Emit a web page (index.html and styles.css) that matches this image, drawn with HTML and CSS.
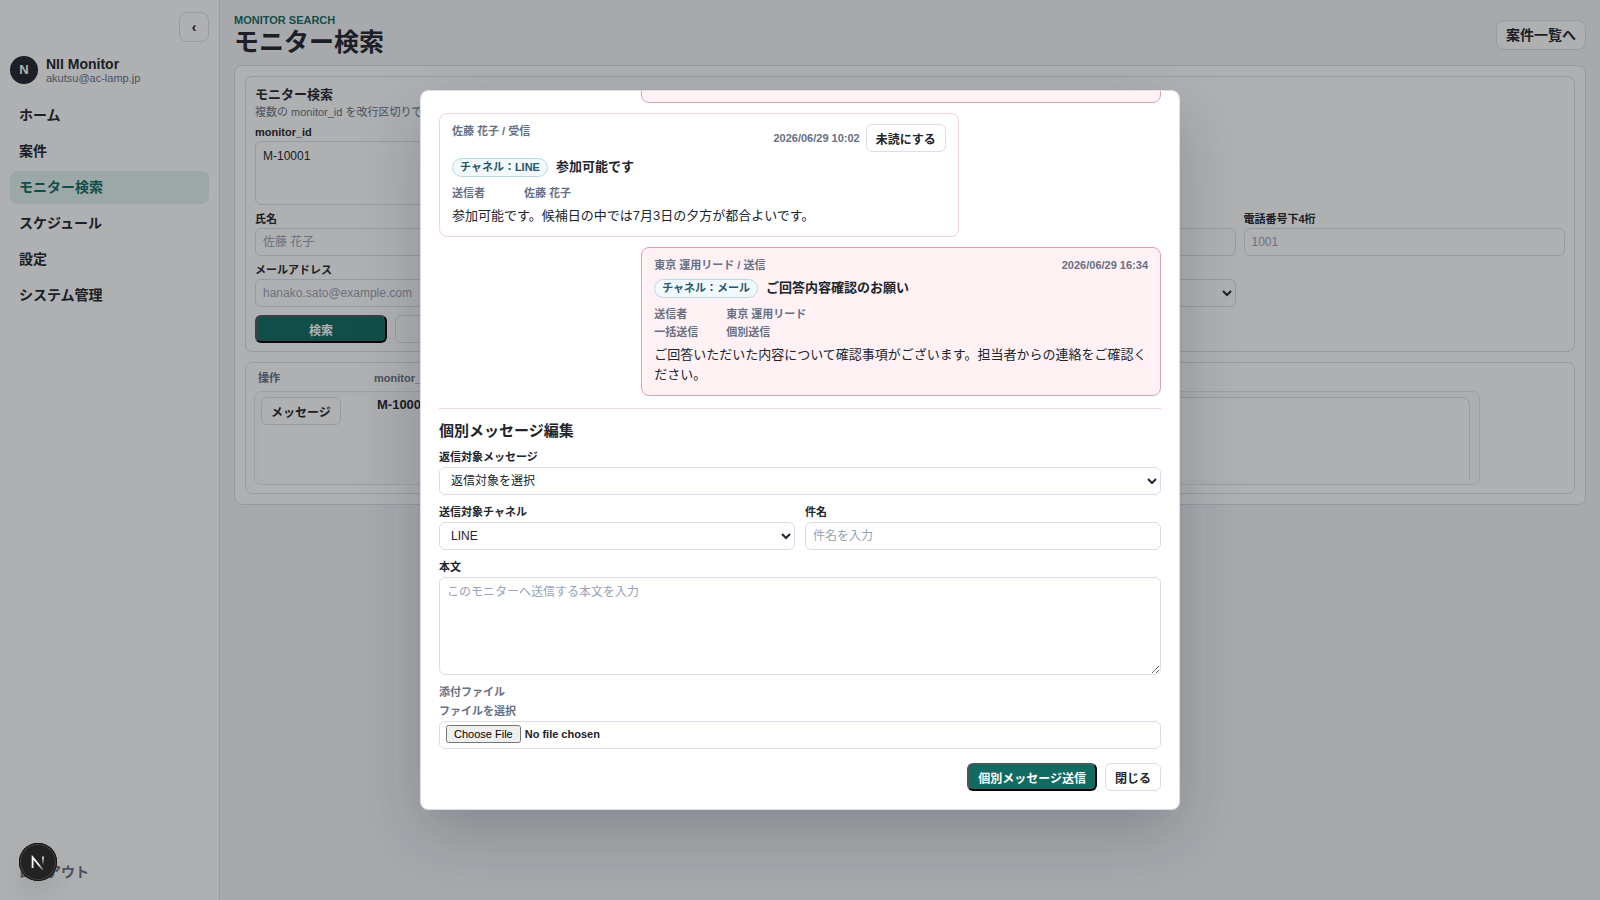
FILE: index.html
```html
<!DOCTYPE html>
<html lang="ja">
<head>
    <meta charset="UTF-8">
    <meta name="viewport" content="width=device-width, initial-scale=1.0">
    <title>モニター検索 | NII Monitor</title>
    <link rel="stylesheet" href="styles.css">
</head>
<body>
    <div class="app">
        <aside class="sidebar">
            <button type="button" class="collapse" aria-label="サイドバーを閉じる">‹</button>
            <div class="account">
                <span class="avatar">N</span>
                <div>
                    <p class="account-name">NII Monitor</p>
                    <p class="account-mail">akutsu@ac-lamp.jp</p>
                </div>
            </div>
            <nav class="nav">
                <a href="#">ホーム</a>
                <a href="#">案件</a>
                <a href="#" class="active">モニター検索</a>
                <a href="#">スケジュール</a>
                <a href="#">設定</a>
                <a href="#">システム管理</a>
            </nav>
            <a href="#" class="logout">ログアウト</a>
        </aside>

        <main class="main">
            <header class="page-header">
                <div>
                    <p class="eyebrow">MONITOR SEARCH</p>
                    <h1>モニター検索</h1>
                </div>
                <a href="#" class="header-link">案件一覧へ</a>
            </header>

            <div class="panel">
                <form class="search">
                    <h2>モニター検索</h2>
                    <p class="hint">複数の monitor_id を改行区切りで検索</p>
                    <div class="search-grid">
                        <label class="field first">monitor_id
                            <textarea class="ids">M-10001</textarea>
                        </label>
                        <label class="field">氏名
                            <input type="text" placeholder="佐藤 花子">
                        </label>
                        <label class="field">氏名カナ
                            <input type="text">
                        </label>
                        <label class="field">LINE ID
                            <input type="text">
                        </label>
                        <label class="field">電話番号下4桁
                            <input type="text" placeholder="1001">
                        </label>
                        <label class="field">メールアドレス
                            <input type="text" placeholder="hanako.sato@example.com">
                        </label>
                        <label class="field">地域
                            <input type="text">
                        </label>
                        <label class="field">状態
                            <select><option>すべて</option></select>
                        </label>
                    </div>
                    <div class="search-actions">
                        <button type="button" class="btn primary">検索</button>
                        <button type="button" class="btn">クリア</button>
                    </div>
                </form>

                <section class="results">
                    <table>
                        <thead>
                            <tr><th>操作</th><th>monitor_id</th><th></th></tr>
                        </thead>
                        <tbody>
                            <tr>
                                <td><button type="button" class="btn">メッセージ</button></td>
                                <td>M-10001</td>
                                <td><div class="detail-box"></div></td>
                            </tr>
                        </tbody>
                    </table>
                </section>
            </div>
        </main>
    </div>

    <div class="overlay">
        <div class="modal" role="dialog" aria-modal="true" aria-label="メッセージ">
            <div class="modal-body">
                <div class="thread">
                    <article class="message sent"></article>

                    <article class="message">
                        <div class="message-head">
                            <span>佐藤 花子 / 受信</span>
                            <div class="message-tools">
                                <time>2026/06/29 10:02</time>
                                <button type="button" class="btn">未読にする</button>
                            </div>
                        </div>
                        <div class="message-subject">
                            <span class="channel">チャネル：LINE</span>
                            <strong>参加可能です</strong>
                        </div>
                        <dl>
                            <dt>送信者</dt><dd>佐藤 花子</dd>
                        </dl>
                        <p class="message-text">参加可能です。候補日の中では7月3日の夕方が都合よいです。</p>
                    </article>

                    <article class="message sent">
                        <div class="message-head">
                            <span>東京 運用リード / 送信</span>
                            <time>2026/06/29 16:34</time>
                        </div>
                        <div class="message-subject">
                            <span class="channel">チャネル：メール</span>
                            <strong>ご回答内容確認のお願い</strong>
                        </div>
                        <dl>
                            <dt>送信者</dt><dd>東京 運用リード</dd>
                            <dt>一括送信</dt><dd>個別送信</dd>
                        </dl>
                        <p class="message-text">ご回答いただいた内容について確認事項がございます。担当者からの連絡をご確認ください。</p>
                    </article>
                </div>

                <form class="compose">
                    <h3>個別メッセージ編集</h3>
                    <label class="field">返信対象メッセージ
                        <select><option>返信対象を選択</option></select>
                    </label>
                    <div class="compose-row">
                        <label class="field">送信対象チャネル
                            <select><option>LINE</option><option>メール</option></select>
                        </label>
                        <label class="field">件名
                            <input type="text" placeholder="件名を入力">
                        </label>
                    </div>
                    <label class="field">本文
                        <textarea class="body-text" placeholder="このモニターへ送信する本文を入力"></textarea>
                    </label>
                    <div class="attach">
                        <p>添付ファイル</p>
                        <label class="field" for="file">ファイルを選択</label>
                        <input type="file" id="file">
                    </div>
                    <div class="modal-actions">
                        <button type="button" class="btn primary">個別メッセージ送信</button>
                        <button type="button" class="btn">閉じる</button>
                    </div>
                </form>
            </div>
        </div>
    </div>

    <button type="button" class="dev-badge" aria-label="開発ツール">
        <svg width="38" height="38" viewBox="0 0 38 38" fill="none">
            <defs>
                <linearGradient id="diag" x1="20" y1="21" x2="25" y2="27" gradientUnits="userSpaceOnUse">
                    <stop stop-color="#fff"/>
                    <stop offset="1" stop-color="#fff" stop-opacity="0.1"/>
                </linearGradient>
                <linearGradient id="stem" x1="24" y1="13" x2="24" y2="22" gradientUnits="userSpaceOnUse">
                    <stop stop-color="#fff"/>
                    <stop offset="1" stop-color="#fff" stop-opacity="0"/>
                </linearGradient>
            </defs>
            <path d="M13.6 25V14.2L24 27" stroke="url(#diag)" stroke-width="1.8"/>
            <path d="M24 13.4V22" stroke="url(#stem)" stroke-width="1.8"/>
        </svg>
    </button>
</body>
</html>
```
FILE: styles.css
```css
* {
    box-sizing: border-box;
}
body {
    margin: 0;
    font-family: "Liberation Sans", "Noto Sans CJK JP", sans-serif;
    font-size: 13px;
    line-height: 20px;
    color: #20242c;
    background: #f5f5f9;
}
h1, h2, h3, p, dl, dd {
    margin: 0;
}
a {
    color: inherit;
    text-decoration: none;
}
button, input, select, textarea {
    font-family: inherit;
    color: inherit;
}

/* layout */
.app {
    display: grid;
    grid-template-columns: 220px 1fr;
    min-height: 100vh;
}
.sidebar {
    display: flex;
    flex-direction: column;
    padding: 12px 10px 11px;
    background: #fff;
    border-right: 1px solid #d9deea;
}
.collapse {
    align-self: flex-end;
    width: 30px;
    height: 30px;
    padding: 0;
    border: 1px solid #d9deea;
    border-radius: 8px;
    background: #fff;
    font-size: 14px;
    font-weight: bold;
}
.account {
    display: flex;
    align-items: center;
    gap: 8px;
    margin: 14px 0 15px;
}
.avatar {
    width: 28px;
    height: 28px;
    border-radius: 50%;
    background: #20242c;
    color: #fff;
    font-size: 13px;
    font-weight: bold;
    line-height: 28px;
    text-align: center;
}
.account-name {
    font-size: 14px;
    font-weight: bold;
    line-height: 16px;
}
.account-mail {
    font-size: 11px;
    line-height: 12px;
    color: #667085;
}
.nav {
    display: grid;
    gap: 3px;
}
.nav a, .logout {
    padding: 0 9px;
    border-radius: 7px;
    font-size: 14px;
    font-weight: bold;
    line-height: 33px;
}
.nav .active {
    background: #e3f3f1;
    color: #116b62;
}
.logout {
    margin-top: auto;
    color: #667085;
}
.main {
    min-width: 0;
    padding: 14px;
}
.page-header {
    display: flex;
    align-items: center;
    justify-content: space-between;
    margin-bottom: 10px;
}
.eyebrow {
    font-size: 11px;
    font-weight: bold;
    line-height: 13px;
    color: #116b62;
}
h1 {
    padding-top: 2px;
    font-size: 25px;
    line-height: 26px;
}
.header-link {
    padding: 0 9px;
    border: 1px solid #d9deea;
    border-radius: 8px;
    background: #fff;
    font-size: 14px;
    font-weight: bold;
    line-height: 28px;
}
.panel {
    display: grid;
    gap: 10px;
    padding: 10px;
    border: 1px solid #d9deea;
    border-radius: 8px;
    background: #fff;
}

/* form parts */
.field {
    display: grid;
    gap: 2px;
    align-content: start;
    font-size: 11px;
    font-weight: bold;
    line-height: 15px;
}
input, select, textarea {
    width: 100%;
    height: 28px;
    padding: 0 7px;
    border: 1px solid #d9deea;
    border-radius: 6px;
    background: #fff;
    font-size: 12px;
    font-weight: normal;
    line-height: 16px;
}
textarea {
    display: block;
    padding: 6px 7px;
}
::placeholder {
    color: #98a2b8;
}
.btn {
    height: 28px;
    padding: 0 9px;
    border: 1px solid #d9deea;
    border-radius: 6px;
    background: #fff;
    font-size: 12px;
    font-weight: bold;
    white-space: nowrap;
}
.btn.primary {
    border: 2px outset #000;
    background: #116b62;
    color: #fff;
}

/* search */
.search, .results {
    padding: 8px 9px;
    border: 1px solid #d9deea;
    border-radius: 7px;
}
.search h2 {
    font-size: 13px;
    line-height: 20px;
}
.hint {
    margin-bottom: 6px;
    font-size: 11px;
    line-height: 15px;
    color: #667085;
}
.search-grid {
    display: grid;
    grid-template-columns: repeat(4, 1fr);
    gap: 8px;
}
.search .field {
    line-height: 13px;
}
.search .first {
    grid-column: 1 / -1;
}
.ids {
    width: 322px;
    height: 64px;
    resize: none;
}
.search-actions {
    display: flex;
    gap: 8px;
    margin-top: 8px;
}
.search-actions .btn {
    width: 132px;
}

/* results */
.results {
    padding: 8px;
    overflow-x: auto;
}
table, thead, tbody {
    display: block;
}
table {
    width: 1226px;
}
tr {
    display: grid;
    grid-template-columns: 110px 110px 1fr;
    gap: 6px;
}
thead tr {
    padding: 0 4px 4px;
}
th {
    padding: 0;
    height: 16px;
    font-size: 11px;
    line-height: 15px;
    text-align: left;
    color: #667085;
}
tbody tr {
    padding: 5px 6px;
    border: 1px solid #e4e8f0;
    border-radius: 7px;
    background: #fbfcfe;
}
td {
    height: 82px;
    padding: 0;
    overflow: hidden;
    font-weight: bold;
    line-height: 15px;
}
td:first-child {
    background: #fff;
}
.detail-box {
    height: 96px;
    margin-right: 3px;
    border: 1px solid #d9deea;
    border-radius: 8px;
    background: #fff;
}

/* message modal */
.overlay {
    position: fixed;
    inset: 0;
    display: grid;
    place-items: center;
    background: rgba(20, 22, 26, 0.34);
}
/* column-reverse keeps the newest message and the form in view */
.modal {
    display: flex;
    flex-direction: column-reverse;
    width: min(760px, 94vw);
    height: 80vh;
    overflow-y: auto;
    scrollbar-width: none;
    border: 1px solid #d9deea;
    border-radius: 8px;
    background: #fff;
    box-shadow: 0 24px 64px rgba(15, 23, 42, 0.22);
}
.modal-body {
    padding: 18px;
}
.thread {
    display: grid;
    gap: 10px;
}
.message {
    display: grid;
    gap: 5px;
    width: 72%;
    padding: 10px 12px;
    border: 1px solid #f3d3dc;
    border-radius: 8px;
}
.message.sent {
    justify-self: end;
    border-color: #dda2b1;
    background: #fff1f4;
}
.message-head {
    display: flex;
    justify-content: space-between;
    align-items: flex-start;
    font-size: 11px;
    font-weight: bold;
    line-height: 15px;
    color: #667085;
}
.message-tools {
    display: flex;
    align-items: center;
    gap: 6px;
}
.message-tools .btn {
    color: #20242c;
}
.message-subject {
    display: flex;
    align-items: center;
    gap: 8px;
}
.channel {
    padding: 0 7px;
    border: 1px solid #b9dbe8;
    border-radius: 10px;
    background: #f1f9fc;
    color: #28566b;
    font-size: 11px;
    font-weight: bold;
    line-height: 17px;
}
dl {
    display: grid;
    grid-template-columns: 72px 1fr;
    row-gap: 2px;
    margin-top: 3px;
    font-size: 11px;
    font-weight: bold;
    line-height: 16px;
    color: #667085;
}
.compose {
    display: grid;
    gap: 10px;
    margin-top: 12px;
    padding-top: 12px;
    border-top: 1px solid #f3d3dc;
}
h3 {
    font-size: 15px;
    line-height: 19px;
}
.compose-row {
    display: grid;
    grid-template-columns: 1fr 1fr;
    gap: 10px;
}
.body-text {
    height: 98px;
    resize: vertical;
}
.attach {
    font-size: 11px;
    font-weight: bold;
    line-height: 15px;
    color: #667085;
}
.attach .field {
    margin: 4px 0 2px;
}
.attach input {
    display: block;
    padding: 3px 6px;
    color: #20242c;
    font-size: 11px;
    font-weight: bold;
}
.modal-actions {
    display: flex;
    justify-content: flex-end;
    gap: 8px;
    margin-top: 4px;
}

.dev-badge {
    position: fixed;
    left: 19px;
    bottom: 19px;
    width: 38px;
    height: 38px;
    padding: 0;
    border: 0;
    border-radius: 50%;
    background: #222;
    box-shadow: inset 0 0 0 1px #111, inset 0 0 0 2px #444, 0 16px 32px -8px rgba(0, 0, 0, 0.24);
}
.dev-badge svg {
    display: block;
}
```
